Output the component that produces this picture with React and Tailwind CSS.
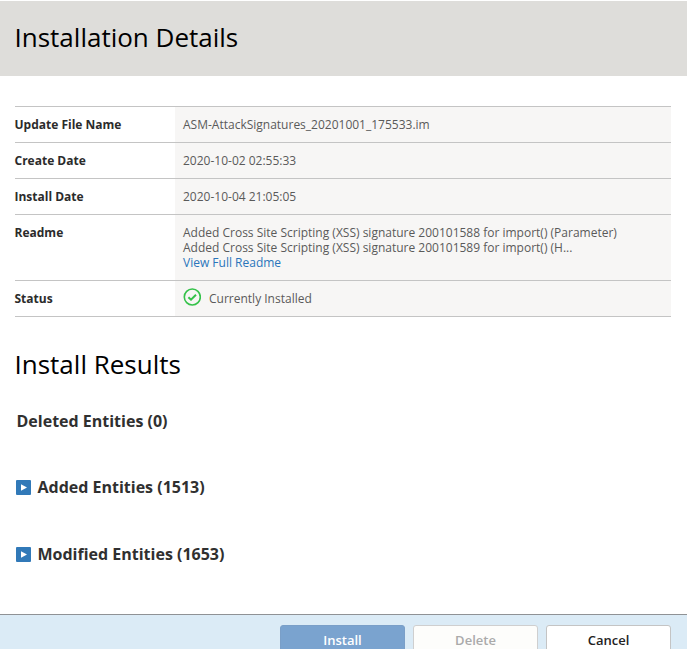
const rows = [
  { label: "Update File Name", value: "ASM-AttackSignatures_20201001_175533.im" },
  { label: "Create Date", value: "2020-10-02 02:55:33" },
  { label: "Install Date", value: "2020-10-04 21:05:05" },
  {
    label: "Readme",
    value: (
      <>
        <div>Added Cross Site Scripting (XSS) signature 200101588 for import() (Parameter)</div>
        <div>Added Cross Site Scripting (XSS) signature 200101589 for import() (H...</div>
        <a className="text-[#2a75bb]">View Full Readme</a>
      </>
    ),
  },
  {
    label: "Status",
    value: (
      <div className="flex items-start">
        <svg className="-mt-[3px] -mb-1 mr-2 h-[18px] w-[18px] shrink-0" viewBox="0 0 18 18" fill="none" stroke="#35c24a">
          <circle cx="9.3" cy="9" r="8" strokeWidth="1.6" />
          <path d="M5.4 9.2l2.6 2.5 5-5" strokeWidth="2" />
        </svg>
        Currently Installed
      </div>
    ),
  },
];

function Entity({ children, className }) {
  return (
    <div className={`flex items-center ${className}`}>
      <svg className="mr-[6.5px] h-[15px] w-[15px] shrink-0" viewBox="0 0 15 15">
        <rect width="15" height="15" rx="1" fill="#3179b8" />
        <path d="M5 4.3v6.4l6-3.2z" fill="#fff" />
      </svg>
      {children}
    </div>
  );
}

export default function App() {
  return (
    <div className="flex h-[650px] w-[688px] flex-col overflow-hidden border-t border-r border-b border-white bg-white font-['Open_Sans',sans-serif] text-[#333]">
      <header className="h-[75px] shrink-0 bg-[#dedddA] pt-[18px] pl-[14.5px] text-[26px] leading-[36px] text-black">
        Installation Details
      </header>
      <main className="flex-1 pt-[30px] pr-[16px] pl-[15px]">
        <div className="border-b border-[#c4c4c4] text-[12px] leading-[15px]">
          {rows.map((r) => (
            <div key={r.label} className="flex border-t border-[#c4c4c4]">
              <div className="-ml-[0.5px] w-[160.5px] shrink-0 py-[10px] font-bold text-[#2b2b2b]">{r.label}</div>
              <div className="flex-1 bg-[#f7f6f5] py-[10px] pl-2 whitespace-nowrap text-[#5a5a5a]">{r.value}</div>
            </div>
          ))}
        </div>
        <h2 className="mt-[29px] -ml-[0.5px] text-[26px] leading-[36px] text-black">Install Results</h2>
        <div className="text-[16px] leading-[22px] font-bold text-[#303030]">
          <div className="mt-[28px] pl-[1.5px]">Deleted Entities (0)</div>
          <Entity className="mt-[44px] pl-px">Added Entities (1513)</Entity>
          <Entity className="mt-[45px] pl-px">Modified Entities (1653)</Entity>
        </div>
      </main>
      <footer className="flex h-[35px] shrink-0 justify-end gap-2 border-t border-[#8f9295] bg-[#dbebf6] pt-[10px] pr-[16px] text-[13px] font-semibold">
        <button className="h-[31px] w-[125px] rounded-[3px] border border-[#7a9fc8] bg-[#7aa3cf] text-white">Install</button>
        <button className="h-[31px] w-[125px] rounded-[3px] border border-[#cfcfcf] bg-[#fdfdfb] text-[#aaa]">Delete</button>
        <button className="h-[31px] w-[125px] rounded-[3px] border border-[#c4c4c4] bg-white text-[#222]">Cancel</button>
      </footer>
    </div>
  );
}
